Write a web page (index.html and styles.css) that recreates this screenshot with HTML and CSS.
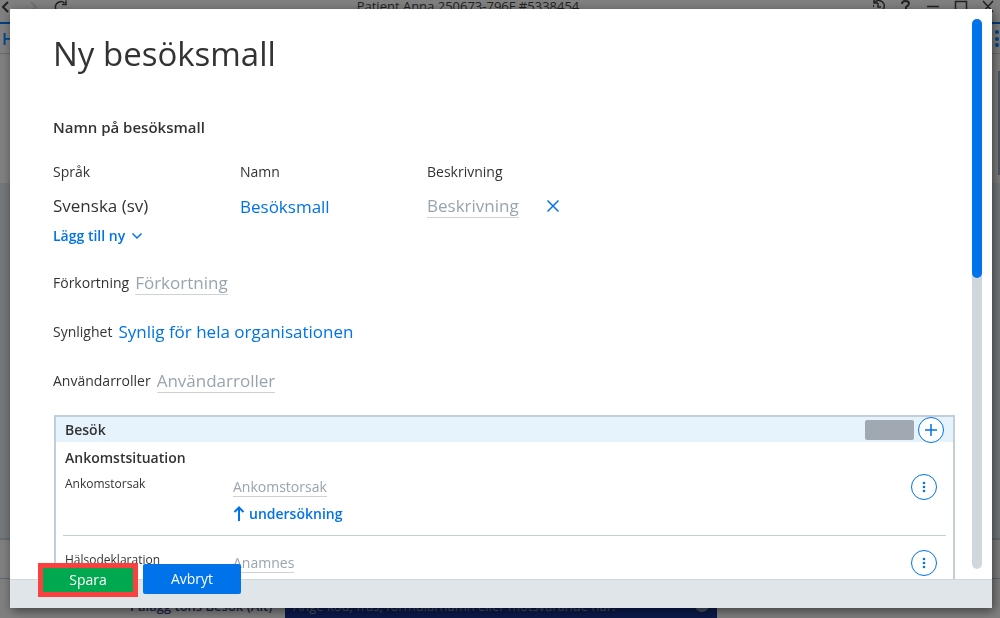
FILE: index.html
```html
<!DOCTYPE html>
<html lang="sv">
<head>
  <meta charset="UTF-8" />
  <meta name="viewport" content="width=device-width, initial-scale=1.0" />
  <title>Ny besöksmall</title>
  <link rel="stylesheet" href="styles.css">
</head>
<body>
  <div class="app">
    <header class="titlebar">
      <svg class="nav-icons" width="130" height="22" viewBox="0 0 130 22">
        <path d="M8 2 L3 7 L8 12" class="ink" />
        <path d="M31 2 L36 7 L31 12" class="faint" />
        <path d="M64.500 3 A5.500 5.500 0 1 0 66 9 M62 4.500 H66 V0.500" class="ink medium" />
      </svg>
      <span class="window-title">Patient Anna 250673-796F #5338454</span>
      <svg class="window-icons" width="130" height="22" viewBox="-4 0 130 22">
        <path d="M1 2 A5.500 5.500 0 1 1 4.500 11.500 M0 0 V3 H4 M4 3 V7 H7" class="ink medium" />
        <path d="M-0.500 5 V8 M0.500 9 L3 11" class="ink thin dashed" />
        <path d="M28 4 Q28 1 31.500 1 Q35 1 35 3.500 Q35 5 32 7 V9" class="ink" />
        <path d="M53 6.500 H65 M81.500 1.500 H92.500 V12 H81.500 Z M109 1 L119 12 M119 1 L109 12" class="ink medium" />
      </svg>
    </header>
    <nav class="tabs">
      <span>H</span>
      <svg width="6" height="20" viewBox="0 0 6 20">
        <circle cx="3" cy="3" r="2" /><circle cx="3" cy="10" r="2" /><circle cx="3" cy="16" r="2" />
      </svg>
    </nav>
    <div class="workspace"><div class="page-scroll"></div></div>
    <div class="strip"></div>
    <footer class="command">
      <span class="command-label">Pålägg tons Besök (Alt)</span>
      <div class="command-box">
        <span>Ange kod, fras, formulärnamn eller motsvarande här.</span>
        <i class="command-dot"></i>
      </div>
    </footer>
  </div>

  <form class="modal" role="dialog" aria-labelledby="title">
    <div class="modal-body">
      <div class="content">
        <h1 id="title">Ny besöksmall</h1>
        <h2>Namn på besöksmall</h2>

        <table class="names">
          <thead>
            <tr><th>Språk</th><th>Namn</th><th>Beskrivning</th></tr>
          </thead>
          <tbody>
            <tr>
              <td>Svenska (sv)</td>
              <td><input class="value" type="text" value="Besöksmall" aria-label="Namn"></td>
              <td>
                <div class="desc">
                  <input class="value" type="text" placeholder="Beskrivning" aria-label="Beskrivning">
                  <button type="button" class="icon-btn" aria-label="Ta bort">
                    <svg width="14" height="14" viewBox="0 0 14 14"><path d="M1.500 1.500 L12.500 12.500 M12.500 1.500 L1.500 12.500" /></svg>
                  </button>
                </div>
              </td>
            </tr>
          </tbody>
        </table>
        <button type="button" class="link-btn">Lägg till ny
          <svg width="12" height="8" viewBox="0 0 12 8"><path d="M1.500 1.500 L6 6 L10.500 1.500" /></svg>
        </button>

        <div class="field">
          <label for="short">Förkortning</label>
          <input class="value" id="short" type="text" placeholder="Förkortning">
        </div>
        <div class="field">
          <label for="visibility">Synlighet</label>
          <select class="value" id="visibility"><option>Synlig för hela organisationen</option></select>
        </div>
        <div class="field">
          <label for="roles">Användarroller</label>
          <input class="value" id="roles" type="text" placeholder="Användarroller">
        </div>

        <section class="panel">
          <div class="panel-head">
            <h3>Besök</h3>
            <span class="tag"></span>
            <button type="button" class="round" aria-label="Lägg till">
              <svg width="14" height="14" viewBox="0 0 14 14"><path d="M7 1 V13 M1 7 H13" /></svg>
            </button>
          </div>
          <h3 class="group">Ankomstsituation</h3>
          <div class="row">
            <label for="reason">Ankomstorsak</label>
            <div class="row-fields">
              <input class="value small" id="reason" type="text" placeholder="Ankomstorsak">
              <button type="button" class="link-btn">
                <svg width="12" height="16" viewBox="0 0 12 16"><path d="M6 15 V2 M1.500 6 L6 1.500 L10.500 6" /></svg>
                undersökning</button>
            </div>
            <button type="button" class="round" aria-label="Fler val">
              <svg width="4" height="12" viewBox="0 0 4 12"><circle cx="2" cy="2" r="1.300" /><circle cx="2" cy="6" r="1.300" /><circle cx="2" cy="10" r="1.300" /></svg>
            </button>
          </div>
          <div class="row">
            <label for="health">Hälsodeklaration</label>
            <div class="row-fields">
              <input class="value small" id="health" type="text" placeholder="Anamnes">
            </div>
            <button type="button" class="round" aria-label="Fler val">
              <svg width="4" height="12" viewBox="0 0 4 12"><circle cx="2" cy="2" r="1.300" /><circle cx="2" cy="6" r="1.300" /><circle cx="2" cy="10" r="1.300" /></svg>
            </button>
          </div>
        </section>
      </div>
      <div class="scrollbar"><div class="thumb"></div></div>
    </div>
    <div class="modal-footer">
      <button type="submit" class="btn save">Spara</button>
      <button type="button" class="btn cancel">Avbryt</button>
    </div>
  </form>
</body>
</html>
```

FILE: styles.css
```css
* {
  box-sizing: border-box;
}
body {
  margin: 0;
  font-family: "Open Sans", "Noto Sans", sans-serif;
  font-size: 14px;
  line-height: 20px;
  color: #333;
  background: #808080;
}
h1, h2, h3 {
  margin: 0;
}
button, input, select {
  font: inherit;
  margin: 0;
  padding: 0;
  border: 0;
  background: none;
}
svg {
  display: block;
  flex: none;
  fill: none;
  stroke: #0073ea;
  stroke-width: 2;
}

/* dimmed application behind the dialog */
.app {
  display: flex;
  flex-direction: column;
  height: 100vh;
  overflow: hidden;
}
.titlebar {
  display: flex;
  justify-content: space-between;
  height: 22px;
  font-size: 13px;
  line-height: 12px;
  color: #222;
}
.ink {
  stroke: #222;
}
.medium {
  stroke-width: 1.5;
}
.thin {
  stroke-width: 1;
}
.dashed {
  stroke-dasharray: 2 1;
}
.faint {
  stroke: #717171;
}
.window-title {
  padding-right: 64px;
}
.tabs {
  display: flex;
  justify-content: space-between;
  align-items: center;
  height: 32px;
  border-top: 2px solid #003f82;
  border-bottom: 1px solid #6c6c6c;
  padding: 0 0 0 2px;
  font-size: 16px;
  font-weight: 600;
  color: #00468f;
}
.tabs svg {
  fill: #00468f;
  stroke: none;
}
.workspace {
  flex: 1;
  display: flex;
  justify-content: flex-end;
  padding-top: 17px;
  background: linear-gradient(#808080 129px, #75787b 129px);
}
.page-scroll {
  width: 2px;
  height: 104px;
  background: #4f5963;
}
.strip {
  height: 41px;
  border-top: 2px solid #676c70;
  border-bottom: 1px solid #5c6770;
}
.command {
  display: flex;
  height: 39px;
  padding: 19px 0 0 130px;
  font-size: 13px;
  line-height: 16px;
}
.command-label {
  width: 155px;
  font-weight: 600;
  color: #1c2547;
}
.command-box {
  display: flex;
  justify-content: space-between;
  width: 432px;
  padding: 0 8px;
  color: #4b5461;
  background: #0c1a4b;
}
.command-dot {
  width: 14px;
  height: 14px;
  border-radius: 50%;
  background: #4b5461;
}

/* dialog */
.modal {
  position: fixed;
  inset: 9px 8px 10px 10px;
  display: flex;
  flex-direction: column;
  background: #fff;
  box-shadow: 2px 3px 10px rgba(0, 0, 0, 0.5);
}
.modal-body {
  flex: 1;
  display: flex;
  min-height: 0;
  padding-right: 10px;
}
.content {
  flex: 1;
  padding: 20px 17px 0 43px;
  overflow: hidden;
}
.scrollbar {
  width: 10px;
  margin: 10px 0;
  border-radius: 5px;
  background: #d0d8de;
}
.thumb {
  height: 47%;
  border-radius: 5px;
  background: #0073ea;
}
h1 {
  font-size: 33px;
  font-weight: 400;
  line-height: 50px;
}
h2 {
  margin-top: 38px;
  font-size: 15px;
  font-weight: 600;
}
.names {
  margin-top: 20px;
  border-collapse: collapse;
}
.names th {
  height: 29px;
  padding: 0;
  text-align: left;
  font-weight: 400;
}
.names td {
  height: 40px;
  padding: 0;
  font-size: 17px;
}
.names th:nth-child(-n+2) {
  width: 187px;
}
.desc {
  display: flex;
  align-items: center;
  gap: 27px;
}
.value {
  field-sizing: content;
  height: 24px;
  font-size: 17px;
  color: #0073ea;
}
.value:placeholder-shown {
  border-bottom: 1px solid #ccd2d7;
}
.value::placeholder {
  color: #98a4ae;
  opacity: 1;
}
select.value {
  appearance: none;
}
.value.small {
  font-size: 14px;
  height: 21px;
}
.link-btn {
  display: flex;
  align-items: center;
  gap: 6px;
  font-weight: 600;
  color: #0073ea;
}
.names svg, .content > .link-btn svg {
  stroke-width: 1.5;
}
.field {
  display: flex;
  align-items: center;
  gap: 6px;
  height: 24px;
  margin-top: 25px;
}
.panel {
  margin-top: 22px;
  margin-left: 1px;
  border: 2px solid #c3ced6;
  border-bottom: 0;
}
.panel h3 {
  font-size: 14px;
  font-weight: 600;
}
.panel-head {
  display: flex;
  align-items: center;
  gap: 4px;
  height: 25px;
  padding: 0 9px;
  background: #e6f3fd;
}
.panel-head h3 {
  flex: 1;
}
.tag {
  width: 49px;
  height: 20px;
  border-radius: 2px;
  background: #a0a9b1;
}
.round {
  display: flex;
  align-items: center;
  justify-content: center;
  width: 26px;
  height: 26px;
  border: 1px solid #0073ea;
  border-radius: 50%;
  background: #fff;
}
.round svg {
  stroke-width: 1.5;
}
.round circle {
  fill: #0073ea;
  stroke: none;
}
.panel .group {
  padding: 6px 9px 0;
}
.row {
  display: flex;
  height: 62px;
  margin: 6px 7px 0;
  padding: 0 9px 0 2px;
  border-bottom: 1px solid #c3ced6;
}
.row + .row {
  margin-top: 14px;
}
.row label {
  width: 168px;
  font-size: 12px;
}
.row-fields {
  flex: 1;
  padding-top: 2px;
}
.row .link-btn {
  margin-top: 7px;
  gap: 4px;
}

.modal-footer {
  display: flex;
  gap: 5px;
  height: 29px;
  padding-left: 28px;
  border-top: 1px solid #d0d8de;
  background: #e0e5e9;
}
.btn {
  height: 30px;
  width: 98px;
  margin-top: -16px;
  border-radius: 2px;
  color: #fff;
  background: #0073ea;
}
.save {
  width: 100px;
  height: 34px;
  margin-top: -17px;
  border: 5px solid #fb4040;
  border-radius: 0;
  background: #00a94f;
}
```
